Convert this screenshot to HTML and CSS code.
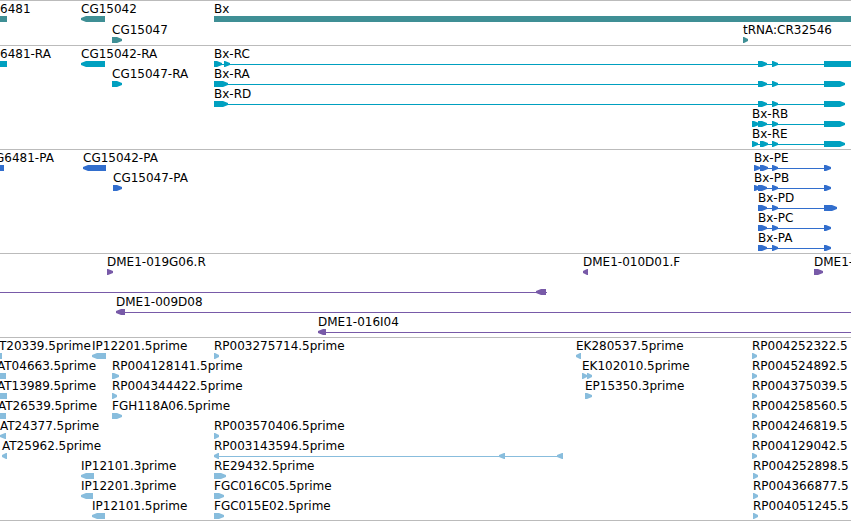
FILE: index.html
```
<!DOCTYPE html>
<html lang="en">
<head>
<meta charset="utf-8">
<title>Genome tracks: Bx region</title>
<link rel="stylesheet" href="styles.css">
</head>
<body>
<main class="browser" id="browser"></main>
<script src="tracks.js"></script>
</body>
</html>
```
FILE: styles.css
```
body {
  margin: 0;
  background: #fff;
  color: #000;
  font: 12px/17px "DejaVu Sans", sans-serif;
}

.browser {
  overflow: hidden;
  border-bottom: 1px solid #bbb;
}

.track {
  border-top: 1px solid #bbb;
  padding-bottom: 3px;
}

.track:last-child {
  padding-bottom: 2px;
}

.row {
  position: relative;
  height: 20px;
}

.label {
  position: absolute;
  top: 0;
  white-space: nowrap;
}

.glyphs {
  position: absolute;
  top: 15px;
  left: 0;
  width: 100%;
  height: 6px;
}

.genes {
  display: grid;
  gap: 1px;
  fill: #3f8f95;
}

.transcripts {
  fill: #00a0c0;
}

.proteins {
  fill: #326ecd;
}

.clones {
  fill: #785aa8;
}

.reads {
  fill: #88bddd;
}
```
FILE: tracks.js
```
// Each row holds labels [position, text] and shapes [kind, start, end].
// Kinds: R arrow on the forward strand, L arrow on the reverse strand,
// B plain block, I intron line. END runs past the right edge of the view.
const END = 4000;
const exons = [["R", 758, 767], ["R", 772, 778], ["R", 824, 845]];
const coding = [["R", 772, 778], ["R", 824, 831]];

const tracks = [
  { name: "genes", rows: [
    { labels: [[0, "6481"], [81, "CG15042"], [214, "Bx"]],
      shapes: [["B", 0, 7], ["L", 81, 105], ["B", 214, END]] },
    { labels: [[112, "CG15047"], [743, "tRNA:CR32546"]],
      shapes: [["R", 112, 122], ["R", 743, 748]] },
  ] },
  { name: "transcripts", rows: [
    { labels: [[0, "6481-RA"], [81, "CG15042-RA"], [214, "Bx-RC"]],
      shapes: [["B", 0, 7], ["L", 81, 105], ["I", 214, END], ["R", 214, 222], ["R", 224, 230],
        ["R", 758, 767], ["R", 772, 778], ["B", 824, END]] },
    { labels: [[112, "CG15047-RA"], [214, "Bx-RA"]],
      shapes: [["R", 112, 122], ["I", 214, 840], ["R", 214, 228], ...exons] },
    { labels: [[214, "Bx-RD"]],
      shapes: [["I", 214, 840], ["R", 214, 228], ...exons] },
    { labels: [[752, "Bx-RB"]],
      shapes: [["I", 752, 840], ["R", 752, 759], ...exons] },
    { labels: [[752, "Bx-RE"]],
      shapes: [["I", 752, 840], ["R", 752, 758], ["R", 760, 768], ["R", 772, 778], ["R", 824, 845]] },
  ] },
  { name: "proteins", rows: [
    { labels: [[-5, "G6481-PA"], [83, "CG15042-PA"], [754, "Bx-PE"]],
      shapes: [["B", 0, 4], ["L", 83, 106], ["I", 754, 830], ["R", 754, 760], ["R", 760, 768], ...coding] },
    { labels: [[113, "CG15047-PA"], [754, "Bx-PB"]],
      shapes: [["R", 113, 122], ["I", 754, 830], ["R", 754, 760], ["R", 758, 767], ...coding] },
    { labels: [[758, "Bx-PD"]],
      shapes: [["I", 758, 830], ["R", 758, 767], ["R", 772, 778], ["R", 824, 837]] },
    { labels: [[758, "Bx-PC"]],
      shapes: [["I", 758, 830], ["R", 758, 767], ...coding] },
    { labels: [[758, "Bx-PA"]],
      shapes: [["I", 758, 830], ["R", 758, 767], ...coding] },
  ] },
  { name: "clones", rows: [
    { labels: [[107, "DME1-019G06.R"], [583, "DME1-010D01.F"], [814, "DME1-"]],
      shapes: [["R", 107, 113], ["L", 583, 588], ["R", 814, 823]] },
    { labels: [], shapes: [["I", 0, 547], ["L", 536, 546]] },
    { labels: [[116, "DME1-009D08"]], shapes: [["I", 120, END], ["L", 116, 125]] },
    { labels: [[318, "DME1-016I04"]], shapes: [["I", 322, END], ["L", 318, 326]] },
  ] },
  { name: "reads", rows: [
    { labels: [[-1, "T20339.5prime"], [92, "IP12201.5prime"], [214, "RP003275714.5prime"],
        [576, "EK280537.5prime"], [752, "RP004252322.5"]],
      shapes: [["B", 0, 2], ["L", 92, 106], ["R", 214, 219], ["L", 576, 581], ["R", 752, 757]] },
    { labels: [[-3, "AT04663.5prime"], [112, "RP004128141.5prime"],
        [582, "EK102010.5prime"], [752, "RP004524892.5"]],
      shapes: [["B", 0, 6], ["R", 112, 119], ["R", 582, 587], ["R", 587, 592], ["R", 752, 757]] },
    { labels: [[-3, "AT13989.5prime"], [112, "RP004344422.5prime"],
        [585, "EP15350.3prime"], [752, "RP004375039.5"]],
      shapes: [["B", 0, 7], ["R", 112, 117], ["R", 585, 592], ["R", 752, 757]] },
    { labels: [[-2, "AT26539.5prime"], [112, "FGH118A06.5prime"], [752, "RP004258560.5"]],
      shapes: [["B", 0, 6], ["R", 112, 122], ["R", 752, 757]] },
    { labels: [[0, "AT24377.5prime"], [214, "RP003570406.5prime"], [752, "RP004246819.5"]],
      shapes: [["L", 0, 6], ["R", 214, 219], ["R", 752, 757]] },
    { labels: [[2, "AT25962.5prime"], [214, "RP003143594.5prime"], [752, "RP004129042.5"]],
      shapes: [["L", 2, 7], ["I", 217, 563], ["L", 214, 219], ["L", 499, 505], ["L", 557, 563],
        ["R", 752, 757]] },
    { labels: [[81, "IP12101.3prime"], [214, "RE29432.5prime"], [753, "RP004252898.5"]],
      shapes: [["L", 81, 94], ["R", 214, 226], ["R", 753, 758]] },
    { labels: [[81, "IP12201.3prime"], [214, "FGC016C05.5prime"], [753, "RP004366877.5"]],
      shapes: [["L", 81, 93], ["R", 214, 224], ["R", 753, 758]] },
    { labels: [[92, "IP12101.5prime"], [214, "FGC015E02.5prime"], [753, "RP004051245.5"]],
      shapes: [["L", 92, 105], ["R", 214, 224], ["R", 753, 758]] },
  ] },
];

function outline([kind, start, end]) {
  const tip = Math.min(6, end - start);
  if (kind === "I") return `M${start} 3H${end}V4H${start}Z`;
  if (kind === "B") return `M${start} 0H${end}V6H${start}Z`;
  if (kind === "R") return `M${start} 0H${end - tip + 1}L${end} 2V4L${end - tip + 1} 6H${start}Z`;
  return `M${end} 0H${start + tip - 1}L${start} 2V4L${start + tip - 1} 6H${end}Z`;
}

document.getElementById("browser").innerHTML = tracks.map(({ name, rows }) =>
  `<section class="track ${name}" aria-label="${name}">` + rows.map(({ labels, shapes }) =>
    `<div class="row">` +
    labels.map(([x, text]) => `<span class="label" style="left:${x}px">${text}</span>`).join("") +
    `<svg class="glyphs" aria-hidden="true">` +
    shapes.map((shape) => `<path d="${outline(shape)}"/>`).join("") +
    `</svg></div>`).join("") +
  `</section>`).join("");
```
